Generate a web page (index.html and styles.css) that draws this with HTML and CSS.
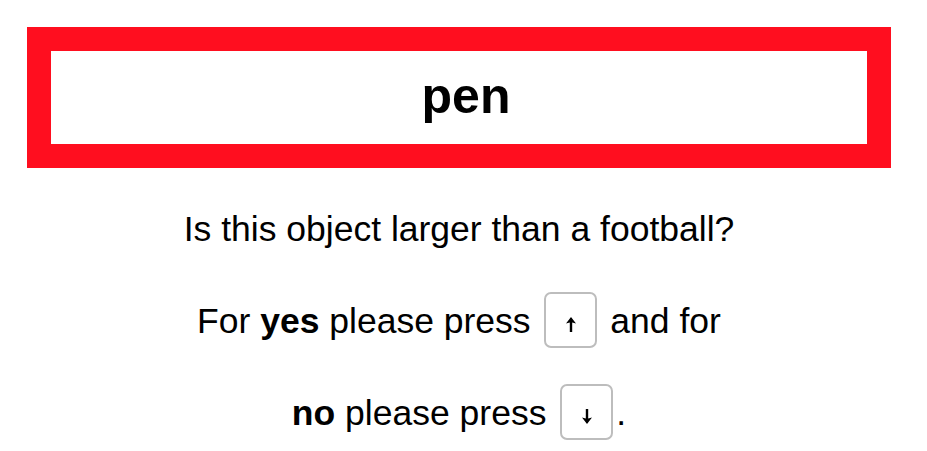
FILE: index.html
```html
<!DOCTYPE html>
<html lang="en">
<head>
<meta charset="utf-8">
<title>Size judgement</title>
<link rel="stylesheet" href="styles.css">
</head>
<body>
<main class="trial">
  <div class="frame"><span class="word">pen</span></div>
  <p class="question">Is this object larger than a football?</p>
  <p class="instructions">For <b>yes</b> please press <span class="key" aria-label="up arrow"><svg class="arrow" viewBox="0 0 10 15" width="10" height="15"><path d="M5 0 L10 6.5 L6.2 5.6 L6.2 15 L3.8 15 L3.8 5.6 L0 6.5 Z"/></svg></span> and for <b>no</b> please press <span class="key" aria-label="down arrow"><svg class="arrow" viewBox="0 0 10 15" width="10" height="15"><path d="M5 15 L10 8.5 L6.2 9.4 L6.2 0 L3.8 0 L3.8 9.4 L0 8.5 Z"/></svg></span>.</p>
</main>
</body>
</html>
```
FILE: styles.css
```css
html, body {
  margin: 0;
  background: #ffffff;
}

body {
  font-family: "Liberation Sans", Arial, Helvetica, sans-serif;
  color: #000000;
}

.trial {
  padding: 27px 36px 0 27px;
  display: flex;
  flex-direction: column;
  align-items: center;
}

.frame {
  align-self: stretch;
  height: 93px;
  border: 24px solid #ff0e1f;
  display: flex;
  align-items: center;
  justify-content: center;
}

.word {
  font-size: 50px;
  font-weight: bold;
  line-height: 1;
  padding: 0 0 4px 14px;
}

.question {
  margin: 41px 0 0;
  font-size: 35.5px;
  text-align: center;
}

.instructions {
  margin: 25px 0 0;
  width: 560px;
  font-size: 35.5px;
  line-height: 92px;
  text-align: center;
}

.key {
  display: inline-block;
  box-sizing: border-box;
  width: 53px;
  height: 56px;
  margin: 0 3px 0 4px;
  padding-top: 4px;
  border: 2px solid #bdbdbd;
  border-radius: 7px;
  overflow: hidden;
  line-height: 48px;
  text-align: center;
  vertical-align: -15px;
}

.arrow {
  display: inline-block;
  vertical-align: middle;
  fill: #000000;
}
```
